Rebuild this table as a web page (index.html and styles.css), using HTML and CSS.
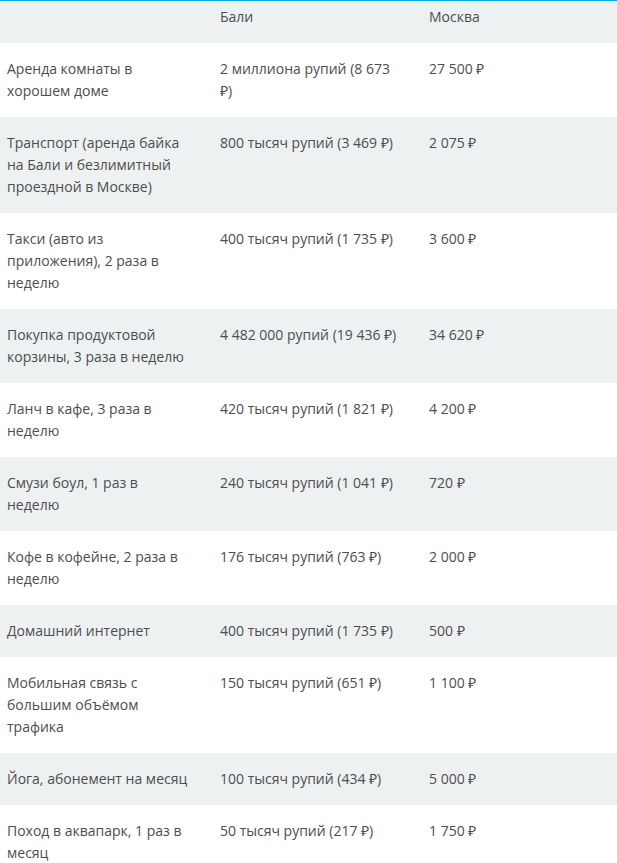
FILE: index.html
```html
<!DOCTYPE html>
<html lang="ru">
<head>
<meta charset="utf-8">
<link rel="stylesheet" href="styles.css">
</head>
<body>
<table class="cost">
  <colgroup><col class="c1"><col class="c2"><col class="c3"></colgroup>
  <thead>
    <tr><th></th><th>Бали</th><th>Москва</th></tr>
  </thead>
  <tbody>
    <tr><td>Аренда комнаты в хорошем доме</td><td>2 миллиона рупий (8 673 ₽)</td><td>27 500 ₽</td></tr>
    <tr><td>Транспорт (аренда байка на Бали и безлимитный проездной в Москве)</td><td>800 тысяч рупий (3 469 ₽)</td><td>2 075 ₽</td></tr>
    <tr><td>Такси (авто из приложения), 2 раза в неделю</td><td>400 тысяч рупий (1 735 ₽)</td><td>3 600 ₽</td></tr>
    <tr><td>Покупка продуктовой корзины, 3 раза в неделю</td><td>4 482 000 рупий (19 436 ₽)</td><td>34 620 ₽</td></tr>
    <tr><td>Ланч в кафе, 3 раза в неделю</td><td>420 тысяч рупий (1 821 ₽)</td><td>4 200 ₽</td></tr>
    <tr><td>Смузи боул, 1 раз в неделю</td><td>240 тысяч рупий (1 041 ₽)</td><td>720 ₽</td></tr>
    <tr><td>Кофе в кофейне, 2 раза в неделю</td><td>176 тысяч рупий (763 ₽)</td><td>2 000 ₽</td></tr>
    <tr><td>Домашний интернет</td><td>400 тысяч рупий (1 735 ₽)</td><td>500 ₽</td></tr>
    <tr><td>Мобильная связь с большим объёмом трафика</td><td>150 тысяч рупий (651 ₽)</td><td>1 100 ₽</td></tr>
    <tr><td>Йога, абонемент на месяц</td><td>100 тысяч рупий (434 ₽)</td><td>5 000 ₽</td></tr>
    <tr><td>Поход в аквапарк, 1 раз в месяц</td><td>50 тысяч рупий (217 ₽)</td><td>1 750 ₽</td></tr>
  </tbody>
</table>
</body>
</html>
```
FILE: styles.css
```css
html, body {
  margin: 0;
  padding: 0;
  background: #ffffff;
}
body {
  font-family: "Open Sans", "Liberation Sans", sans-serif;
  font-size: 14px;
  line-height: 22px;
  color: #4d4d4d;
}
.cost {
  width: 617px;
  border-collapse: collapse;
  table-layout: fixed;
  border-top: 1px solid #0aa6e8;
}
.c1 { width: 213px; }
.c2 { width: 209px; }
.c3 { width: 195px; }
.cost th, .cost td {
  text-align: left;
  vertical-align: top;
  font-weight: 400;
  padding: 15px 22px 15px 7px;
}
.cost th {
  padding-top: 5px;
}
.cost thead tr {
  background: #eef1f2;
}
.cost tbody tr:nth-child(even) {
  background: #eef1f2;
}
```
